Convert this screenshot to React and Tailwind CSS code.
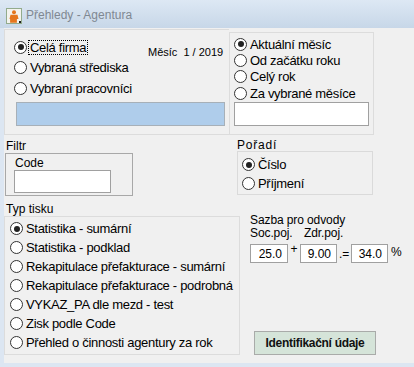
import React from "react";

function Radio({ checked }) {
  return (
    <span className="w-[13px] h-[13px] rounded-full border border-[#333] bg-white flex items-center justify-center shrink-0">
      {checked && <span className="w-[6px] h-[6px] rounded-full bg-[#222]" />}
    </span>
  );
}

function RadioRow({ label, checked, focus, h }) {
  return (
    <div className={`flex items-center gap-[1px] ${h}`}>
      <Radio checked={checked} />
      <span
        className={`px-[1px] border text-[13px] leading-[13px] tracking-[-0.3px] text-black whitespace-nowrap ${
          focus ? "border-dotted border-black" : "border-transparent"
        }`}
      >
        {label}
      </span>
    </div>
  );
}

function AppIcon() {
  return (
    <svg width="16" height="16" viewBox="0 0 16 16" className="shrink-0 mt-[3px]">
      <rect x="0.5" y="0.5" width="15" height="15" fill="#f3f3ee" stroke="#93ab8c" />
      <circle cx="8" cy="4.2" r="2" fill="#e5761d" />
      <path d="M4.5 6.8h7l1 4.2h-1.6v3.8h-6.8v-3.8H3.5z" fill="#e5761d" />
      <rect x="13" y="13" width="2" height="2" fill="#222" />
    </svg>
  );
}

export default function App() {
  return (
    <div className="w-[414px] h-[367px] bg-[#f0f0f0] flex flex-col overflow-hidden font-['Liberation_Sans',Arial,sans-serif] text-black">
      {/* Title bar */}
      <div className="h-[28px] shrink-0 bg-gradient-to-b from-[#dde8f4] to-[#c7d7e8] flex items-start pt-[5px] pl-[6px] gap-[4px]">
        <AppIcon />
        <span className="text-[12px] leading-[20px] text-[#7f8892]">Přehledy - Agentura</span>
      </div>

      <div className="flex flex-1 min-h-0">
        <div className="w-[4px] bg-[#dce6f2] shrink-0" />
        <div className="flex-1 flex flex-col">
          {/* Top row */}
          <div className="flex items-end mt-[1px]">
            <div className="w-[225px] h-[106px] border-l border-t border-b border-[#dcdcdc] flex flex-col pt-[7px]">
              <div className="flex items-center h-[20.5px] pl-[9px]">
                <div className="w-[134px]">
                  <RadioRow label="Celá firma" checked focus h="h-[20.5px]" />
                </div>
                <span className="text-[11px] leading-[13px] pt-[10px] whitespace-nowrap">Měsíc&nbsp; 1 / 2019</span>
              </div>
              <div className="pl-[9px]">
                <RadioRow label="Vybraná střediska" h="h-[20.5px]" />
                <RadioRow label="Vybraní pracovníci" h="h-[20.5px]" />
              </div>
              <div className="ml-[11px] mt-[3.5px] w-[209px] h-[24px] bg-[#afcdeb] border border-[#a7b0b8]" />
            </div>
            <div className="w-[145px] h-[103px] border border-[#dcdcdc] pt-[3px] pl-[4px] flex flex-col">
              <RadioRow label="Aktuální měsíc" checked h="h-[16.4px]" />
              <RadioRow label="Od začátku roku" h="h-[16.4px]" />
              <RadioRow label="Celý rok" h="h-[16.4px]" />
              <RadioRow label="Za vybrané měsíce" h="h-[16.4px]" />
              <div className="mt-[0.4px] w-[135px] h-[24px] bg-white border border-[#a0a0a0]" />
            </div>
          </div>

          {/* Middle row */}
          <div className="flex h-[81px]">
            <div className="w-[233px] flex flex-col">
              <div className="mt-[5px] h-[13px] pl-[2px] text-[12px] leading-[13px]">Filtr</div>
              <div className="ml-[1px] w-[128px] h-[43px] border border-[#a8a8a8] pl-[8px] pt-[2px] flex flex-col">
                <div className="pl-[1px] text-[12px] leading-[14px]">Code</div>
                <div className="w-[97px] h-[23px] bg-white border border-[#a0a0a0]" />
              </div>
              <div className="mt-[6px] h-[14px] pl-[2px] text-[12px] leading-[14px]">Typ tisku</div>
            </div>
            <div className="flex flex-col">
              <div className="mt-[3.5px] h-[12.5px] text-[12px] leading-[12px] tracking-[0.8px]">Pořadí</div>
              <div className="w-[136px] h-[44px] border border-[#dadada] pt-[3.4px] pl-[4px]">
                <RadioRow label="Číslo" checked h="h-[18.6px]" />
                <RadioRow label="Příjmení" h="h-[18.6px]" />
              </div>
            </div>
          </div>

          {/* Bottom row */}
          <div className="flex">
            <div className="w-[236px] h-[139px] border border-[#dcdcdc] pt-[2px] pl-[5px]">
              <RadioRow label="Statistika - sumární" checked h="h-[19px]" />
              <RadioRow label="Statistika - podklad" h="h-[19px]" />
              <RadioRow label="Rekapitulace přefakturace - sumární" h="h-[19px]" />
              <RadioRow label="Rekapitulace přefakturace - podrobná" h="h-[19px]" />
              <RadioRow label="VYKAZ_PA dle mezd - test" h="h-[19px]" />
              <RadioRow label="Zisk podle Code" h="h-[19px]" />
              <RadioRow label="Přehled o činnosti agentury za rok" h="h-[19px]" />
            </div>
            <div className="flex flex-col pl-[10px]">
              <div className="-mt-[2px] text-[12px] leading-[12.5px] tracking-[-0.1px]">Sazba pro odvody</div>
              <div className="flex text-[12px] leading-[12.5px] tracking-[-0.1px]">
                <span className="w-[54px]">Soc.poj.</span>
                <span>Zdr.poj.</span>
              </div>
              <div className="flex items-start mt-[5px] text-[12px]">
                <div className="w-[38px] h-[19px] bg-white border border-[#a0a0a0] flex items-end justify-end pr-[5px] pb-[1px] leading-[13px]">25.0</div>
                <span className="w-[12px] text-center leading-[13px] -mt-[1px]">+</span>
                <div className="w-[37px] h-[19px] bg-white border border-[#a0a0a0] flex items-end justify-end pr-[5px] pb-[1px] leading-[13px]">9.00</div>
                <span className="w-[14px] pl-[2px] leading-[13px] mt-[4px]">.=</span>
                <div className="w-[37px] h-[19px] bg-white border border-[#a0a0a0] flex items-end justify-end pr-[5px] pb-[1px] leading-[13px]">34.0</div>
                <span className="ml-[3px] leading-[13px] mt-[2px]">%</span>
              </div>
              <button className="mt-[68px] ml-[4px] w-[122px] h-[24px] bg-[#d5e4d9] border border-[#a9aba9] text-[12px] font-bold tracking-[-0.3px] text-[#111] flex items-center justify-center">
                Identifikační údaje
              </button>
            </div>
          </div>
        </div>
      </div>
      <div className="h-[4px] shrink-0 bg-[#dce6f2]" />
    </div>
  );
}
